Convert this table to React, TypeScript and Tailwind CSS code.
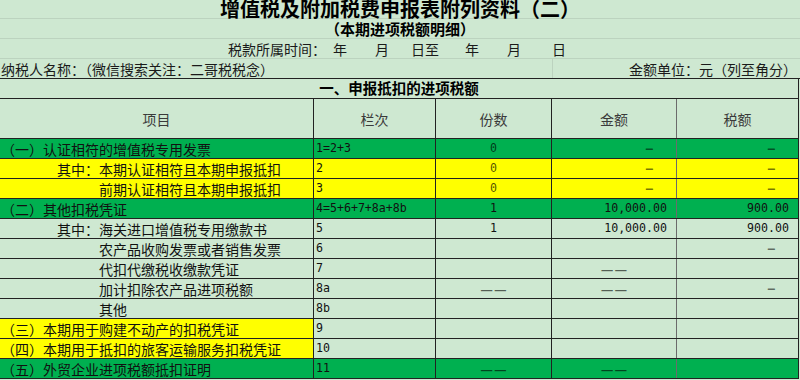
import React from 'react';

type Row = {
  item: string;
  indent: number;
  no: string;
  cnt?: string;
  amt?: string;
  tax?: string;
  bg: 'green' | 'yellow' | 'plain' | 'firstYellow';
};

const rows: Row[] = [
  { item: '（一）认证相符的增值税专用发票', indent: 0, no: '1=2+3', cnt: '0', amt: '-', tax: '-', bg: 'green' },
  { item: '其中：本期认证相符且本期申报抵扣', indent: 4, no: '2', cnt: '0', amt: '-', tax: '-', bg: 'yellow' },
  { item: '前期认证相符且本期申报抵扣', indent: 7, no: '3', cnt: '0', amt: '-', tax: '-', bg: 'yellow' },
  { item: '（二）其他扣税凭证', indent: 0, no: '4=5+6+7+8a+8b', cnt: '1', amt: '10,000.00', tax: '900.00', bg: 'green' },
  { item: '其中：海关进口增值税专用缴款书', indent: 4, no: '5', cnt: '1', amt: '10,000.00', tax: '900.00', bg: 'plain' },
  { item: '农产品收购发票或者销售发票', indent: 7, no: '6', tax: '-', bg: 'plain' },
  { item: '代扣代缴税收缴款凭证', indent: 7, no: '7', amt: '——', bg: 'plain' },
  { item: '加计扣除农产品进项税额', indent: 7, no: '8a', cnt: '——', amt: '——', tax: '-', bg: 'plain' },
  { item: '其他', indent: 7, no: '8b', bg: 'plain' },
  { item: '（三）本期用于购建不动产的扣税凭证', indent: 0, no: '9', bg: 'firstYellow' },
  { item: '（四）本期用于抵扣的旅客运输服务扣税凭证', indent: 0, no: '10', bg: 'firstYellow' },
  { item: '（五）外贸企业进项税额抵扣证明', indent: 0, no: '11', cnt: '——', amt: '——', bg: 'green' },
];

const cjk = "font-['Noto_Sans_CJK_SC',sans-serif]";
const mono = "font-['DejaVu_Sans_Mono',monospace]";

const rowBg = (bg: Row['bg']) =>
  bg === 'green' ? 'bg-[#00b050]' : bg === 'yellow' ? 'bg-[#ffff00]' : '';

const Value = ({ v, align }: { v?: string; align: 'center' | 'right' }) => {
  if (!v) return null;
  if (v === '——')
    return (
      <span className={`${cjk} text-[14px] font-bold leading-none text-black/60 flex gap-[1px]`}>
        <span>—</span>
        <span>—</span>
      </span>
    );
  if (v === '-')
    return (
      <span className={`${mono} text-[12px] font-bold text-black/55 ${align === 'right' ? 'mr-[14px]' : ''}`}>–</span>
    );
  if (v === '0') return <span className={`${mono} text-[11.6px] text-black/70`}>0</span>;
  return <span className={`${mono} text-[11.6px] text-[#111]`}>{v}</span>;
};

export default function App() {
  return (
    <div className={`w-[800px] h-[380px] overflow-hidden bg-[#cee8d1] text-[#1a1a1a] ${cjk}`}>
      {/* title rows */}
      <div className="h-[19px] border-b border-[#bcd3bf] flex items-end justify-center">
        <span className="text-[20px] font-bold leading-[19px] text-black">增值税及附加税费申报表附列资料（二）</span>
      </div>
      <div className="h-[20px] border-b border-[#bcd3bf] flex items-center justify-center">
        <span className="text-[15px] font-bold leading-[18px] text-black">（本期进项税额明细）</span>
      </div>
      <div className="h-[20px] border-b border-[#bcd3bf] flex items-center pl-[228px] text-[14px] leading-none">
        <span>税款所属时间：</span>
        <span className="ml-[7px]">年</span>
        <span className="ml-[28px]">月</span>
        <span className="ml-[22px]">日至</span>
        <span className="ml-[26px]">年</span>
        <span className="ml-[28px]">月</span>
        <span className="ml-[31px]">日</span>
      </div>
      <div className="h-[20px] border-b border-[#222] flex text-[14px] leading-none">
        <div className="w-[553px] border-r border-[#bcd3bf] flex items-center pl-[1px]">
          纳税人名称：（微信搜索关注：二哥税税念）
        </div>
        <div className="flex-1 flex items-center justify-end pr-[3px]">金额单位：元（列至角分）</div>
      </div>

      {/* section header */}
      <div className="w-[799px] h-[20px] border-b border-r border-[#222] flex items-center justify-center">
        <span className="text-[14.5px] font-bold leading-none text-black">一、申报抵扣的进项税额</span>
      </div>

      {/* column header */}
      <div className="w-[799px] h-[40px] border-b border-[#222] flex text-[14px] text-[#3a3a3a] leading-none">
        <div className="w-[314px] border-r border-[#222] flex items-center justify-center">项目</div>
        <div className="w-[122px] border-r border-[#222] flex items-center justify-center">栏次</div>
        <div className="w-[116px] border-r border-[#222] flex items-center justify-center">份数</div>
        <div className="w-[125px] border-r border-[#6b6b6b] flex items-center justify-center">金额</div>
        <div className="w-[122px] border-r border-[#222] flex items-center justify-center">税额</div>
      </div>

      {/* data rows */}
      {rows.map((r) => (
        <div key={r.no} className={`w-[799px] h-[20px] border-b border-[#222] flex leading-none ${rowBg(r.bg)}`}>
          <div
            className={`w-[314px] border-r border-[#222] flex items-center text-[14px] whitespace-nowrap text-[#111] ${
              r.bg === 'firstYellow' ? 'bg-[#ffff00]' : ''
            } ${r.indent === 4 ? 'pl-[57px]' : r.indent === 7 ? 'pl-[99px]' : 'pl-[1px]'}`}
          >
            {r.item}
          </div>
          <div className={`w-[122px] border-r border-[#222] flex items-center pl-[2px] ${mono} text-[11.6px] text-[#111]`}>
            {r.no}
          </div>
          <div className="w-[116px] border-r border-[#222] flex items-center justify-center">
            <Value v={r.cnt} align="center" />
          </div>
          <div
            className={`w-[125px] border-r border-[#6b6b6b] flex items-center ${
              r.amt === '——' ? 'justify-center' : 'justify-end pr-[9px]'
            }`}
          >
            <Value v={r.amt} align="right" />
          </div>
          <div className="w-[122px] border-r border-[#222] flex items-center justify-end pr-[9px]">
            <Value v={r.tax} align="right" />
          </div>
        </div>
      ))}
    </div>
  );
}
